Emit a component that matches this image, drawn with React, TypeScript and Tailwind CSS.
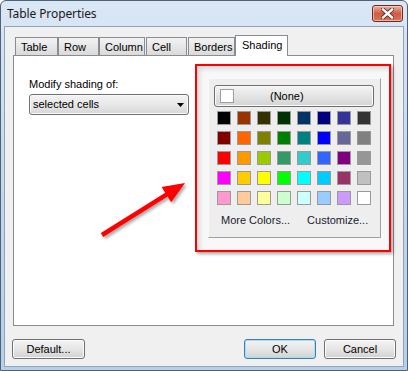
import React from "react";

const palette: string[][] = [
  ["#000000", "#993300", "#333300", "#003300", "#003366", "#000080", "#333399", "#333333"],
  ["#800000", "#FF6600", "#808000", "#008000", "#008080", "#0000FF", "#666699", "#808080"],
  ["#FF0000", "#FF9900", "#99CC00", "#339966", "#33CCCC", "#3366FF", "#800080", "#969696"],
  ["#FF00FF", "#FFCC00", "#FFFF00", "#00FF00", "#00FFFF", "#00CCFF", "#993366", "#C0C0C0"],
  ["#FF99CC", "#FFCC99", "#FFFF99", "#CCFFCC", "#CCFFFF", "#99CCFF", "#CC99FF", "#FFFFFF"],
];

const tabs = [
  { label: "Table", w: "w-[43px]", ml: "ml-0" },
  { label: "Row", w: "w-[41px]", ml: "ml-0" },
  { label: "Column", w: "w-[46px]", ml: "ml-0" },
  { label: "Cell", w: "w-[41px]", ml: "ml-[1px]" },
  { label: "Borders", w: "w-[47px]", ml: "ml-[1px]" },
];

function Btn({ children, w, focus }: { children: React.ReactNode; w: string; focus?: boolean }) {
  return (
    <div
      className={`${w} h-[20px] rounded-[3px] border flex items-center justify-center bg-gradient-to-b from-[#f4f4f4] via-[#e6e6e6] to-[#d2d2d2] ${
        focus ? "border-[#3c7fb1] shadow-[inset_0_0_0_1px_#a8dcf7]" : "border-[#707070] shadow-[inset_0_0_0_1px_#fbfbfb]"
      }`}
    >
      {children}
    </div>
  );
}

export default function App() {
  return (
    <div className="relative w-[408px] h-[371px] overflow-hidden bg-white">
      <div className="w-[408px] h-[371px] flex flex-col border border-[#4e6179] rounded-t-[6px] bg-gradient-to-b from-[#dae7f5] via-[#c3d7ed] to-[#b7cfe9] font-['Liberation_Sans',Arial,sans-serif] text-[11px] text-black">
        {/* Title bar */}
        <div className="h-[25px] flex items-start justify-between pl-[6px] pr-[4px]">
          <span className="mt-[5px] text-[12px] leading-[16px] text-[#1a1a1a] font-['Noto_Sans','Liberation_Sans',sans-serif] tracking-[-0.1px]">
            Table Properties
          </span>
          <div className="mt-[4px] w-[31px] h-[17px] rounded-[3px] border border-[#6e2a22] bg-gradient-to-b from-[#eab1a3] via-[#cf5b41] to-[#d9735a] shadow-[inset_0_0_0_1px_rgba(255,220,210,0.6)] flex items-center justify-center">
            <svg width="13" height="11" viewBox="0 0 13 11">
              <path d="M2 1.5 L11 9.5 M11 1.5 L2 9.5" stroke="#5a2a22" strokeWidth="4.2" strokeLinecap="square" />
              <path d="M2 1.5 L11 9.5 M11 1.5 L2 9.5" stroke="#ffffff" strokeWidth="2.4" strokeLinecap="square" />
            </svg>
          </div>
        </div>

        {/* Body */}
        <div className="mx-[3px] mb-[3px] flex-1 bg-[#f0f0f0] border border-[#8fa4bb] pt-[8px] pl-[8px] flex flex-col">
          {/* Tabs */}
          <div className="ml-[2px] h-[20px] flex items-end">
            {tabs.map((t) => (
              <div
                key={t.label}
                className={`${t.w} ${t.ml} h-[18px] border border-b-0 border-[#898c95] bg-gradient-to-b from-[#f3f3f3] to-[#dadada] pl-[5px] pt-[3px] leading-[13px]`}
              >
                {t.label}
              </div>
            ))}
            <div className="relative z-10 w-[53px] h-[21px] -mb-px border border-b-0 border-[#898c95] bg-white pl-[6px] pt-[3px] leading-[13px]">
              Shading
            </div>
          </div>

          {/* Panel */}
          <div className="w-[381px] h-[271px] border border-[#898c95] bg-white pt-[8px] pl-[15px] flex items-start">
            <div className="w-[160px] mt-[14px] flex flex-col">
              <div className="leading-[13px]">Modify shading of:</div>
              <div className="mt-[3px] h-[21px] rounded-[3px] border border-[#707070] bg-gradient-to-b from-[#f3f3f3] via-[#e8e8e8] to-[#d6d6d6] shadow-[inset_0_0_0_1px_#fafafa] flex items-center justify-between pl-[3px] pr-[4px]">
                <span>selected cells</span>
                <svg width="7" height="4" viewBox="0 0 7 4">
                  <path d="M0 0 H7 L3.5 4 Z" fill="#000" />
                </svg>
              </div>
            </div>

            {/* Red highlight box */}
            <div className="ml-[6px] w-[196px] h-[188px] border-2 border-[#ff0000] bg-[#f8f8f8] shadow-[2px_2px_3px_rgba(0,0,0,0.35),inset_3px_3px_5px_rgba(0,0,0,0.12)] pl-[11px] pt-[12px]">
              <div className="w-[173px] h-[160px] bg-[#eeeeee] border border-[#f9f9f9] border-r-[#a0a0a0] border-b-[#a0a0a0] pt-[6px] pl-[5px] flex flex-col">
                <div className="w-[160px] h-[22px] rounded-[3px] border border-[#6f6f6f] bg-gradient-to-b from-[#f4f4f4] via-[#e4e4e4] to-[#d4d4d4] shadow-[inset_0_0_0_1px_#fafafa] flex items-center pl-[5px]">
                  <div className="w-[14px] h-[14px] bg-white border border-[#a0a0a0]" />
                  <span className="ml-[36px]">(None)</span>
                </div>
                <div className="ml-[3px] mt-[4px] grid grid-cols-8 gap-[6px] w-[154px]">
                  {palette.flat().map((c, i) => (
                    <div key={i} className="w-[14px] h-[14px] border border-[#9a9a9a]" style={{ backgroundColor: c }} />
                  ))}
                </div>
                <div className="mt-[9px] ml-[7px] flex leading-[13px] text-[#1a1a2e]">
                  <span>More Colors...</span>
                  <span className="ml-[17px]">Customize...</span>
                </div>
              </div>
            </div>
          </div>

          {/* Buttons */}
          <div className="mt-[13px] ml-[-1px] w-[384px] flex items-center">
            <Btn w="w-[73px]">Default...</Btn>
            <div className="ml-auto flex gap-[8px]">
              <Btn w="w-[72px]" focus>
                OK
              </Btn>
              <Btn w="w-[72px]">Cancel</Btn>
            </div>
          </div>
        </div>
      </div>

      {/* Annotation arrow */}
      <svg className="absolute left-0 top-0 pointer-events-none" width="408" height="371" viewBox="0 0 408 371">
        <defs>
          <filter id="sh" x="-20%" y="-20%" width="140%" height="140%">
            <feDropShadow dx="2" dy="2" stdDeviation="1.5" floodColor="#000" floodOpacity="0.35" />
          </filter>
        </defs>
        <g filter="url(#sh)">
          <line x1="102" y1="235" x2="168" y2="193.6" stroke="#ff0000" strokeWidth="4.5" />
          <polygon points="185,183 171.2,202.3 161.6,187.1" fill="#ff0000" />
        </g>
      </svg>
    </div>
  );
}
